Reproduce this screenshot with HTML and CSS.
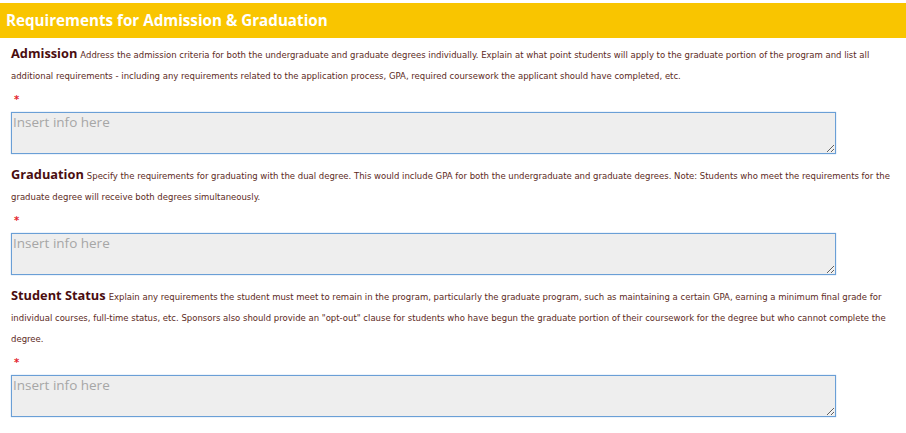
FILE: index.html
```html
<!DOCTYPE html>
<html>
<head>
<meta charset="utf-8">
<link rel="stylesheet" href="styles.css">
</head>
<body>
<div class="panel">
  <h2 class="panel-title">Requirements for Admission &amp; Graduation</h2>
  <div class="panel-body">
    <div class="field">
      <p class="desc"><span class="label">Admission</span>Address the admission criteria for both the undergraduate and graduate degrees individually. Explain at what point students will apply to the graduate portion of the program and list all additional requirements - including any requirements related to the application process, GPA, required coursework the applicant should have completed, etc.</p>
      <div class="req">*</div>
      <textarea class="input" placeholder="Insert info here"></textarea>
    </div>
    <div class="field">
      <p class="desc"><span class="label">Graduation</span>Specify the requirements for graduating with the dual degree. This would include GPA for both the undergraduate and graduate degrees. Note: Students who meet the requirements for the graduate degree will receive both degrees simultaneously.</p>
      <div class="req">*</div>
      <textarea class="input" placeholder="Insert info here"></textarea>
    </div>
    <div class="field">
      <p class="desc"><span class="label">Student Status</span>Explain any requirements the student must meet to remain in the program, particularly the graduate program, such as maintaining a certain GPA, earning a minimum final grade for individual courses, full-time status, etc. Sponsors also should provide an "opt-out" clause for students who have begun the graduate portion of their coursework for the degree but who cannot complete the degree.</p>
      <div class="req">*</div>
      <textarea class="input" placeholder="Insert info here"></textarea>
    </div>
  </div>
</div>
</body>
</html>
```
FILE: styles.css
```css
html, body {
  margin: 0;
  padding: 0;
  background: #fff;
}
body {
  padding-top: 3px;
  font-family: "DejaVu Sans", sans-serif;
}
.panel-title {
  margin: 0;
  height: 35px;
  line-height: 35px;
  background: #f9c500;
  color: #fff;
  font-family: "Open Sans", sans-serif;
  font-weight: 700;
  font-size: 15.2px;
  padding-left: 6px;
}
.panel-body {
  padding: 7px 6px 0 11px;
}
.field {
  display: flex;
  flex-direction: column;
  align-items: flex-start;
  margin-bottom: 12px;
}
.desc {
  margin: 0;
  line-height: 21px;
  font-size: 8.5px;
  color: #5c2a1c;
}
.label {
  display: inline-block;
  margin-right: 3px;
  line-height: 14px;
  font-family: "Open Sans", sans-serif;
  font-weight: 700;
  font-size: 12.8px;
  color: #4a0d10;
}
.req {
  margin-top: 2px;
  height: 21px;
  line-height: 22px;
  padding-left: 3px;
  color: #e3232c;
  font-size: 10px;
  font-weight: bold;
}
.input {
  display: block;
  margin: 2px 0 0 0;
  box-sizing: border-box;
  width: 825px;
  height: 42px;
  background: #eeeeee;
  border: 1px solid #6a9fd6;
  box-shadow: 0 0 1px #8fb7e3;
  padding: 0 1px;
  font-family: "Open Sans", sans-serif;
  font-size: 13.5px;
  color: #333;
  outline: none;
}
.input::placeholder {
  color: #a6a6a6;
}
```
